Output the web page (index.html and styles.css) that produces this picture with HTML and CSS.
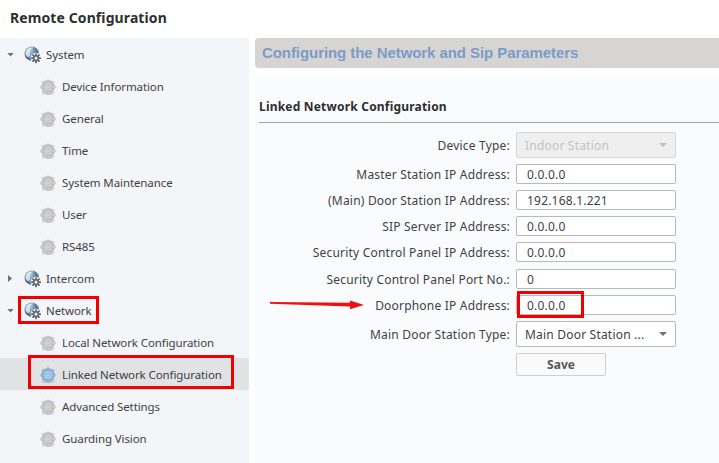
FILE: index.html
```html
<!DOCTYPE html>
<html lang="en">
<head>
<meta charset="utf-8">
<title>Remote Configuration</title>
<link rel="stylesheet" href="styles.css">
</head>
<body>
<svg class="defs" width="0" height="0" aria-hidden="true">
  <defs>
    <radialGradient id="globe" cx="0.35" cy="0.3" r="0.8">
      <stop offset="0" stop-color="#c3d6e6"/>
      <stop offset="0.5" stop-color="#5f87a8"/>
      <stop offset="1" stop-color="#2c4f70"/>
    </radialGradient>
    <symbol id="gear" viewBox="0 0 16 16">
      <ellipse cx="8" cy="14.800" rx="6" ry="1.100" fill="#000" opacity=".14"/>
      <g class="petals">
        <circle cx="8" cy="2.800" r="2"/>
        <circle cx="11.700" cy="4.300" r="2"/>
        <circle cx="13.200" cy="8" r="2"/>
        <circle cx="11.700" cy="11.700" r="2"/>
        <circle cx="8" cy="13.200" r="2"/>
        <circle cx="4.300" cy="11.700" r="2"/>
        <circle cx="2.800" cy="8" r="2"/>
        <circle cx="4.300" cy="4.300" r="2"/>
      </g>
      <circle class="hub" cx="8" cy="8" r="4.800"/>
      <circle cx="8" cy="8" r="3.200" fill="none" stroke="#fff" stroke-opacity=".7" stroke-width=".8"/>
      <circle class="core" cx="8" cy="8" r="1.500"/>
    </symbol>
    <symbol id="node" viewBox="0 0 18 18">
      <circle cx="7.700" cy="7.700" r="7.200" fill="url(#globe)"/>
      <path d="M2.200 4.600C4 2 7 .9 9.600 1.500 8.400 3 6 3.400 5.500 5.300 5 7.200 6.600 8 5.900 10 5.200 11.600 3 11 2 9.200 1.300 7.700 1.400 6 2.200 4.600Z" fill="#e3edf5" fill-opacity=".8"/>
      <circle cx="12" cy="12.200" r="5.500" fill="#f3f5f8"/>
      <g stroke="#55585c" stroke-width="1.700" stroke-linecap="round">
        <path d="M12 8V16.400M7.800 12.200H16.200M9 9.200l6 6M15 9.200l-6 6"/>
      </g>
      <circle cx="12" cy="12.200" r="3.100" fill="#6b6f74"/>
      <circle cx="12" cy="12.200" r="1.400" fill="#eef0f2"/>
    </symbol>
  </defs>
</svg>

<header class="topbar">Remote Configuration</header>

<div class="layout">
  <nav class="sidebar">
    <div class="row">
      <span class="caret caret-open"></span>
      <svg class="node-icon"><use href="#node"/></svg>
      <span>System</span>
    </div>
    <div class="row child"><svg class="gear gray"><use href="#gear"/></svg><span>Device Information</span></div>
    <div class="row child"><svg class="gear gray"><use href="#gear"/></svg><span>General</span></div>
    <div class="row child"><svg class="gear gray"><use href="#gear"/></svg><span>Time</span></div>
    <div class="row child"><svg class="gear gray"><use href="#gear"/></svg><span>System Maintenance</span></div>
    <div class="row child"><svg class="gear gray"><use href="#gear"/></svg><span>User</span></div>
    <div class="row child"><svg class="gear gray"><use href="#gear"/></svg><span>RS485</span></div>
    <div class="row">
      <span class="caret caret-closed"></span>
      <svg class="node-icon"><use href="#node"/></svg>
      <span>Intercom</span>
    </div>
    <div class="row">
      <span class="caret caret-open"></span>
      <svg class="node-icon"><use href="#node"/></svg>
      <span>Network</span>
      <span class="mark mark-network"></span>
    </div>
    <div class="row child"><svg class="gear gray"><use href="#gear"/></svg><span>Local Network Configuration</span></div>
    <div class="row child selected"><svg class="gear blue"><use href="#gear"/></svg><span>Linked Network Configuration</span>
      <span class="mark mark-linked"></span>
    </div>
    <div class="row child"><svg class="gear gray"><use href="#gear"/></svg><span>Advanced Settings</span></div>
    <div class="row child"><svg class="gear gray"><use href="#gear"/></svg><span>Guarding Vision</span></div>
  </nav>

  <main class="content">
    <h1 class="page-title">Configuring the Network and Sip Parameters</h1>
    <section class="panel">
      <h2 class="section-title">Linked Network Configuration</h2>
      <div class="form">
        <div class="field field-tall">
          <label>Device Type:</label>
          <div class="control select disabled"><span>Indoor Station</span><i class="select-caret"></i></div>
        </div>
        <div class="field">
          <label>Master Station IP Address:</label>
          <div class="control"><span>0.0.0.0</span></div>
        </div>
        <div class="field">
          <label>(Main) Door Station IP Address:</label>
          <div class="control"><span>192.168.1.221</span></div>
        </div>
        <div class="field">
          <label>SIP Server IP Address:</label>
          <div class="control"><span>0.0.0.0</span></div>
        </div>
        <div class="field">
          <label>Security Control Panel IP Address:</label>
          <div class="control"><span>0.0.0.0</span></div>
        </div>
        <div class="field field-gap">
          <label>Security Control Panel Port No.:</label>
          <div class="control"><span>0</span></div>
        </div>
        <div class="field">
          <svg class="arrow" width="96" height="16" viewBox="0 0 96 16" aria-hidden="true">
            <path d="M0 7 L80 7.800 L80 5.600 L94 10 L80 14.200 L80 11.400 L0 8.800 Z" fill="#f01010"/>
          </svg>
          <label>Doorphone IP Address:</label>
          <div class="control"><span>0.0.0.0</span><span class="mark mark-doorphone"></span></div>
        </div>
        <div class="field field-tall">
          <label>Main Door Station Type:</label>
          <div class="control select"><span>Main Door Station ...</span><i class="select-caret"></i></div>
        </div>
        <div class="field field-button">
          <label></label>
          <button class="save" type="button">Save</button>
        </div>
      </div>
    </section>
  </main>
</div>
</body>
</html>
```

FILE: styles.css
```css
* { box-sizing: border-box; }

html, body {
  margin: 0;
  height: 100%;
}

body {
  width: 719px;
  height: 463px;
  overflow: hidden;
  background: #fff;
  color: #3f4145;
  font-family: "Noto Sans", "Open Sans", sans-serif;
  font-size: 12px;
}

.defs { position: absolute; }

.petals { fill: var(--petal); stroke: var(--petal-edge); stroke-width: .6; }
.hub { fill: var(--hub); }
.core { fill: var(--core); }

.topbar {
  height: 38px;
  padding-left: 10px;
  line-height: 36px;
  font-size: 14px;
  font-weight: 700;
  letter-spacing: .1px;
  color: #2e2e30;
}

.layout {
  display: flex;
  height: 425px;
}

.sidebar {
  width: 249px;
  flex: none;
  background: #f3f5f8;
  font-size: 11.500px;
  letter-spacing: -.1px;
}

.row {
  position: relative;
  display: flex;
  align-items: center;
  height: 32px;
  padding-left: 7px;
  padding-top: 1px;
}

.row.child { padding-left: 40px; }

.row.selected { background: #e1e2e3; }

.caret {
  width: 7px;
  height: 4px;
  margin-right: 10px;
  flex: none;
}

.caret-open {
  background: #707070;
  clip-path: polygon(0 0, 100% 0, 50% 100%);
}

.caret-closed {
  width: 4px;
  height: 7px;
  margin: 0 12px 0 1px;
  background: #707070;
  clip-path: polygon(0 0, 100% 50%, 0 100%);
}

.node-icon {
  width: 18px;
  height: 18px;
  margin-right: 4px;
  flex: none;
}

.gear {
  width: 16px;
  height: 16px;
  margin-right: 6px;
  flex: none;
}

.gear.gray {
  --petal: #cfcfcf;
  --petal-edge: #a9a9a9;
  --hub: #bdbdbd;
  --core: #dcdcdc;
}

.gear.blue {
  --petal: #93b8da;
  --petal-edge: #6f9fca;
  --hub: #8db3d8;
  --core: #bcd4ea;
}

.mark {
  position: absolute;
  border: 3px solid #f00000;
  pointer-events: none;
}

.mark-network { left: 18px; top: 2px; width: 81px; height: 28px; }
.mark-linked { left: 28px; top: -3px; width: 206px; height: 34px; }
.mark-doorphone { left: 0; top: -5px; width: 67px; height: 27px; }

.content {
  flex: 1;
  min-width: 0;
  margin-left: 6px;
  display: flex;
  flex-direction: column;
}

.page-title {
  margin: 0;
  height: 30px;
  padding-left: 7px;
  line-height: 30px;
  background: #d6d5d3;
  border-radius: 4px 0 0 4px;
  color: #7c9bc9;
  font-family: "Liberation Sans", Arial, sans-serif;
  font-size: 15px;
  font-weight: 700;
  letter-spacing: -.07px;
}

.panel {
  flex: 1;
  margin-top: 6px;
  background: #fafbfd;
  padding: 0 0 0 4px;
  letter-spacing: .2px;
}

.section-title {
  margin: 0;
  height: 49px;
  padding-top: 23px;
  line-height: 20px;
  border-bottom: 1px solid #a3a3a3;
  color: #2e2e30;
  font-size: 12px;
  font-weight: 700;
}

.form {
  display: flex;
  flex-direction: column;
  gap: 6px;
  padding-top: 9px;
}

.field {
  position: relative;
  display: flex;
  align-items: center;
  height: 20px;
}

.field-tall { height: 26px; }
.field-button { height: 23px; }
.field-gap { margin-top: 1px; }

.field label {
  width: 251px;
  flex: none;
  text-align: right;
}

.control {
  position: relative;
  width: 160px;
  height: 100%;
  margin-left: 6px;
  padding-left: 10px;
  display: flex;
  align-items: center;
  background: #fff;
  border: 1px solid #b9b9b9;
  border-radius: 2px;
}

.select {
  padding-left: 8px;
  justify-content: space-between;
}

.select.disabled {
  background: #efefef;
  border-color: #d4d4d4;
  color: #c4c4c4;
}

.select-caret {
  width: 8px;
  height: 4px;
  margin-right: 8px;
  background: #707070;
  clip-path: polygon(0 0, 100% 0, 50% 100%);
}

.disabled .select-caret { background: #c0c0c0; }

.arrow {
  position: absolute;
  left: 11px;
  top: 0;
}

.save {
  width: 90px;
  height: 100%;
  margin-left: 6px;
  padding: 0;
  background: #fafafa;
  border: 1px solid #cfcfcf;
  border-radius: 2px;
  color: #55575b;
  font: 700 12px "Noto Sans", "Open Sans", sans-serif;
}
```
